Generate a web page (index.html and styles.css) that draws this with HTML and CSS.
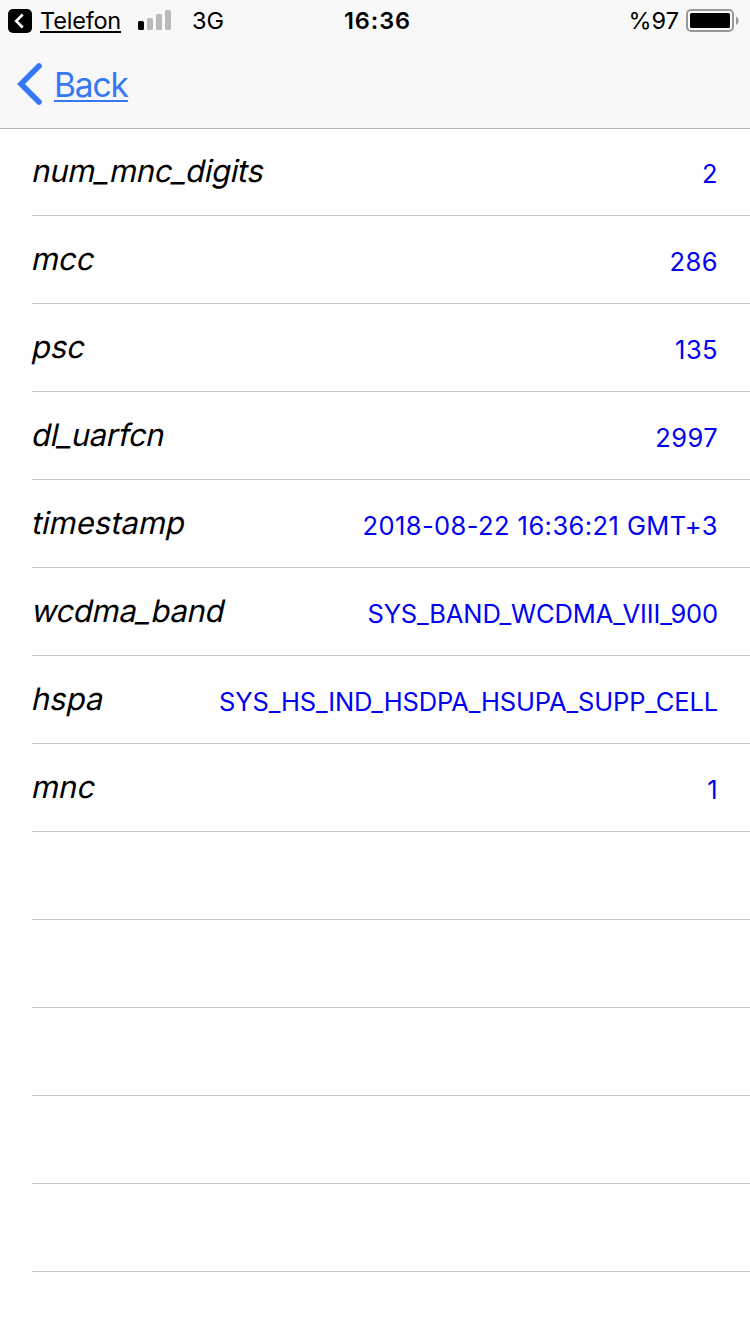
FILE: index.html
```html
<!DOCTYPE html>
<html lang="en">
<head>
    <meta charset="UTF-8">
    <meta name="viewport" content="width=device-width, initial-scale=1.0">
    <title>Cell Info</title>
    <link rel="stylesheet" href="styles.css">
</head>
<body>
    <header class="header">
        <div class="status-bar">
            <div class="status-left">
                <svg class="return-icon" width="24" height="24" viewBox="0 0 24 24">
                    <rect width="24" height="24" rx="5" fill="#000"/>
                    <path d="M14.700 5.500L8.200 12l6.500 6.500" fill="none" stroke="#fff" stroke-width="2.600"/>
                </svg>
                <span class="return-app">Telefon</span>
                <svg class="signal" width="34" height="20" viewBox="0 0 34 20">
                    <rect x="0" y="11" width="6" height="9" rx="1.5" fill="#000"/>
                    <rect x="9" y="8" width="6" height="12" rx="1.5" fill="#bababa"/>
                    <rect x="18" y="4" width="6" height="16" rx="1.5" fill="#bababa"/>
                    <rect x="27" y="0" width="6" height="20" rx="1.5" fill="#bababa"/>
                </svg>
                <span class="network">3G</span>
            </div>
            <div class="clock">16:36</div>
            <div class="status-right">
                <span class="percent">%97</span>
                <svg class="battery" width="54" height="24" viewBox="0 0 54 24">
                    <rect x="1" y="1" width="46" height="21" rx="4" fill="none" stroke="#989898" stroke-width="2"/>
                    <rect x="4" y="4" width="40" height="15" rx="1.5" fill="#000"/>
                    <path d="M50 7.5c3.5 1.500 3.500 7 0 8.500z" fill="#989898"/>
                </svg>
            </div>
        </div>
        <nav class="nav-bar">
            <svg class="chevron" width="26" height="42" viewBox="0 0 26 42">
                <path d="M22 3L4 21l18 18" fill="none" stroke="#3478f6" stroke-width="5.6" stroke-linecap="round"/>
            </svg>
            <span class="back">Back</span>
        </nav>
    </header>

    <main class="list">
        <div class="row"><span class="key long">num_mnc_digits</span><span class="value">2</span></div>
        <div class="row"><span class="key">mcc</span><span class="value">286</span></div>
        <div class="row"><span class="key">psc</span><span class="value">135</span></div>
        <div class="row"><span class="key long">dl_uarfcn</span><span class="value">2997</span></div>
        <div class="row"><span class="key">timestamp</span><span class="value">2018-08-22 16:36:21 GMT+3</span></div>
        <div class="row"><span class="key long">wcdma_band</span><span class="value constant">SYS_BAND_WCDMA_VIII_900</span></div>
        <div class="row"><span class="key">hspa</span><span class="value constant">SYS_HS_IND_HSDPA_HSUPA_SUPP_CELL</span></div>
        <div class="row"><span class="key">mnc</span><span class="value">1</span></div>
        <div class="row"></div>
        <div class="row"></div>
        <div class="row"></div>
        <div class="row"></div>
        <div class="row"></div>
    </main>
</body>
</html>
```
FILE: styles.css
```css
* {
    box-sizing: border-box;
}

body {
    margin: 0;
    height: 1334px;
    overflow: hidden;
    background-color: #fff;
    color: #000;
    font-family: Inter, "Liberation Sans", sans-serif;
}

svg {
    display: block;
    flex: none;
}

.header {
    height: 129px;
    background-color: #f8f8f8;
    border-bottom: 1px solid #b2b2b2;
}

.status-bar {
    display: grid;
    grid-template-columns: 1fr auto 1fr;
    align-items: center;
    height: 42px;
    padding: 0 10px 0 8px;
    font-size: 23.5px;
    line-height: 42px;
}

.status-left, .status-right {
    display: flex;
    align-items: center;
}

.status-right {
    justify-content: flex-end;
}

.return-app {
    margin-left: 8px;
    width: 81px;
    letter-spacing: -0.2px;
    text-decoration: underline;
    text-decoration-thickness: 2px;
    text-underline-offset: 2px;
}

.signal {
    margin-left: 17px;
    margin-bottom: 2px;
}

.network {
    margin-left: 20px;
}

.clock {
    padding-left: 7px;
    font-weight: 600;
    letter-spacing: 0.9px;
}

.battery {
    margin-left: 7px;
}

.nav-bar {
    display: flex;
    align-items: center;
    height: 84px;
    padding-left: 17px;
    color: #3478f6;
}

.back {
    margin-left: 11px;
    padding-top: 1px;
    font-size: 33.5px;
    letter-spacing: -1.1px;
    text-decoration: underline;
    text-decoration-thickness: 2px;
    text-underline-offset: 3px;
}

.row {
    display: flex;
    justify-content: space-between;
    height: 88px;
    margin-left: 32px;
    padding-right: 32px;
    border-bottom: 1px solid #c8c7cc;
    line-height: 88px;
}

.row:first-child {
    height: 87px;
    line-height: 86px;
}

/* slanted upright letters, the real italic has a different "a" */
.key {
    height: 86px;
    margin-top: -1px;
    margin-left: 1px;
    font-size: 31px;
    transform: skewX(-12deg);
}

.long {
    letter-spacing: -0.3px;
}

.value {
    padding-top: 2px;
    font-size: 25.5px;
    letter-spacing: 0.42px;
    color: #0000f5;
}

.constant {
    letter-spacing: -0.15px;
}
```
